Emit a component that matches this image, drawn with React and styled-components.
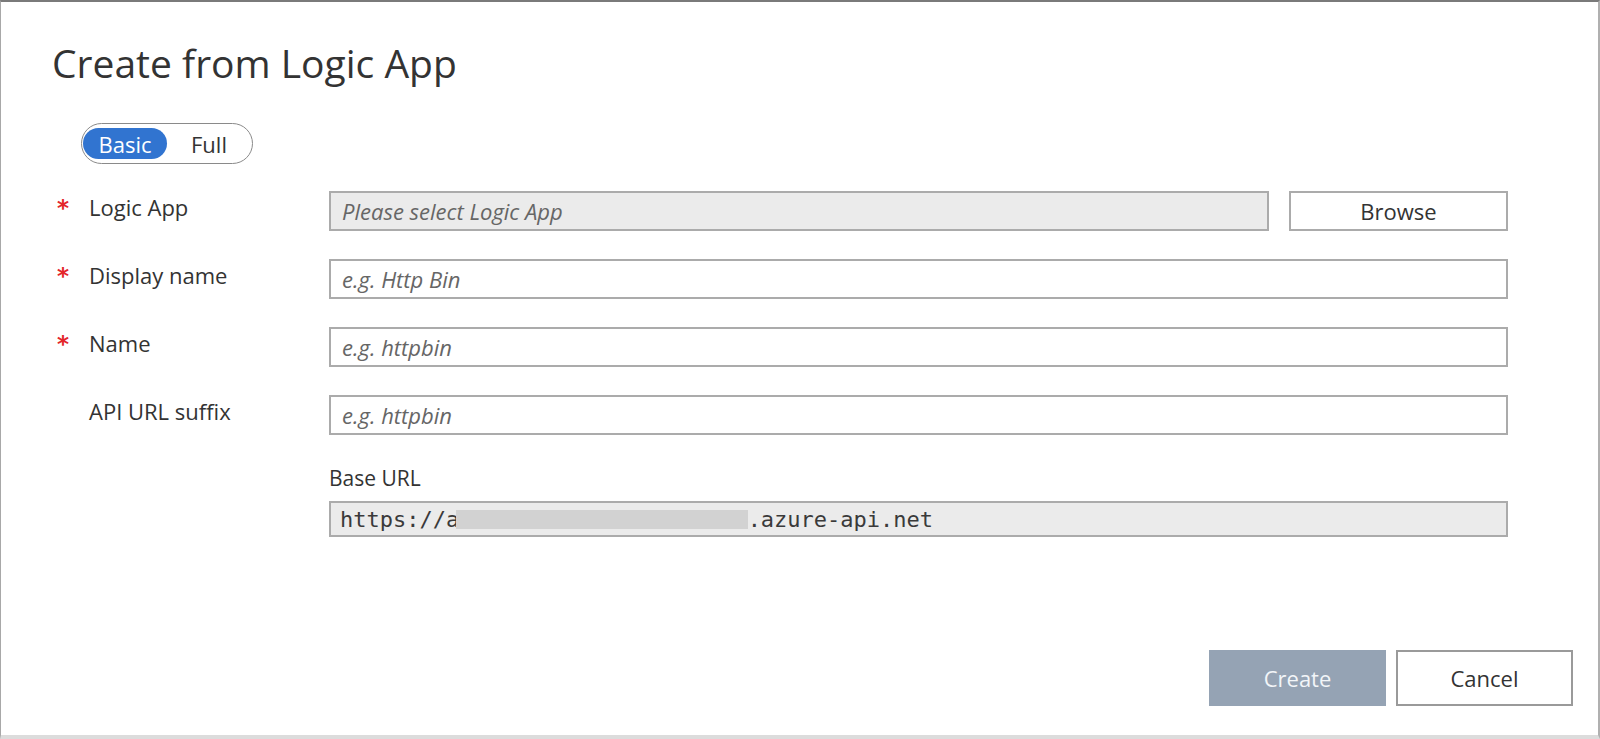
import React, { useState } from "react";
import styled, { createGlobalStyle } from "styled-components";

const GlobalStyle = createGlobalStyle`
  html, body {
    margin: 0;
    padding: 0;
    background: #ffffff;
  }
  body {
    font-family: "Open Sans", "Noto Sans", sans-serif;
    color: #333;
  }
  * {
    box-sizing: border-box;
  }
`;

const fields = [
  { key: "display", label: "Display name", placeholder: "e.g. Http Bin", required: true },
  { key: "name", label: "Name", placeholder: "e.g. httpbin", required: true },
  { key: "suffix", label: "API URL suffix", placeholder: "e.g. httpbin", required: false },
];

function App() {
  const [mode, setMode] = useState("basic");

  return (
    <>
      <GlobalStyle />
      <Dialog>
        <Title>Create from Logic App</Title>

        <Toggle>
          <ToggleOption active={mode === "basic"} onClick={() => setMode("basic")}>
            Basic
          </ToggleOption>
          <ToggleOption active={mode === "full"} onClick={() => setMode("full")}>
            Full
          </ToggleOption>
        </Toggle>

        <Form>
          <Row>
            <Required>*</Required>
            <Label>Logic App</Label>
            <FieldGroup>
              <TextInput readOnly disabledLook placeholder="Please select Logic App" />
              <BrowseButton>Browse</BrowseButton>
            </FieldGroup>
          </Row>

          {fields.map((f) => (
            <Row key={f.key}>
              <Required>{f.required ? "*" : ""}</Required>
              <Label>{f.label}</Label>
              <TextInput placeholder={f.placeholder} />
            </Row>
          ))}

          <Row>
            <span />
            <span />
            <BaseUrl>
              <SmallLabel>Base URL</SmallLabel>
              <UrlBox>
                https://a<Hidden>xxxxxxxxxxxxxxxxxxxxxx</Hidden>.azure-api.net
              </UrlBox>
            </BaseUrl>
          </Row>
        </Form>

        <Footer>
          <PrimaryButton disabled>Create</PrimaryButton>
          <SecondaryButton>Cancel</SecondaryButton>
        </Footer>
      </Dialog>
    </>
  );
}

// 다이얼로그 전체 박스
const Dialog = styled.div`
  width: 1600px;
  height: 739px;
  display: flex;
  flex-direction: column;
  background: #fff;
  border-top: 2px solid #7a7a7a;
  border-left: 1px solid #a8a8a8;
  border-right: 2px solid #b0b0b0;
  border-bottom: 4px solid #dcdcdc;
  padding: 37px 25px 29px 0;
`;

const Title = styled.h1`
  margin: 0 0 0 51px;
  font-size: 39px;
  line-height: 48px;
  font-weight: 400;
  color: #333;
`;

const Toggle = styled.div`
  margin: 36px 0 0 80px;
  width: 172px;
  height: 41px;
  display: grid;
  grid-template-columns: 1fr 1fr;
  padding: 4px 1px;
  border: 1.5px solid #8a8a8a;
  border-radius: 21px;
`;

const ToggleOption = styled.button`
  border: none;
  margin: 0;
  padding: 0;
  border-radius: 16px;
  font-family: "Open Sans", sans-serif;
  font-size: 22px;
  line-height: 30px;
  cursor: pointer;
  background: ${(p) => (p.active ? "#3174d0" : "transparent")};
  color: ${(p) => (p.active ? "#fff" : "#333")};
`;

const Form = styled.div`
  margin-top: 27px;
  padding: 0 65px 0 56px;
  display: flex;
  flex-direction: column;
  gap: 28px;
`;

const Row = styled.div`
  display: grid;
  grid-template-columns: 32px 240px 1fr;
  align-items: start;
`;

const Required = styled.span`
  color: #e3262a;
  font-family: "DejaVu Sans", sans-serif;
  font-weight: 700;
  font-size: 23px;
  line-height: 30px;
  padding-top: 2px;
`;

const Label = styled.label`
  font-size: 22px;
  line-height: 30px;
  padding-top: 1px;
  color: #333;
`;

const FieldGroup = styled.div`
  display: flex;
  gap: 20px;
`;

const TextInput = styled.input`
  flex: 1;
  width: 100%;
  height: 40px;
  padding: 0 11px;
  border: 2px solid #ababab;
  border-radius: 0;
  background: ${(p) => (p.disabledLook ? "#ebebeb" : "#fff")};
  font-family: "Open Sans", sans-serif;
  font-size: 22px;
  color: #333;
  outline: none;
  &::placeholder {
    color: #666;
    font-style: italic;
  }
`;

const BrowseButton = styled.button`
  width: 219px;
  height: 40px;
  background: #fff;
  border: 2px solid #ababab;
  font-family: "Open Sans", sans-serif;
  font-size: 22px;
  color: #333;
  padding: 0;
`;

const BaseUrl = styled.div`
  display: flex;
  flex-direction: column;
  gap: 8px;
`;

const SmallLabel = styled.div`
  font-size: 21px;
  line-height: 30px;
  color: #333;
`;

const UrlBox = styled.div`
  height: 36px;
  display: flex;
  align-items: center;
  padding: 0 9px;
  border: 2px solid #ababab;
  background: #ebebeb;
  font-family: "DejaVu Sans Mono", "Liberation Mono", monospace;
  font-size: 22px;
  color: #3a3a3a;
  white-space: pre;
`;

const Hidden = styled.span`
  display: inline-block;
  height: 19px;
  line-height: 19px;
  margin-left: -3px;
  background: #d2d2d2;
  color: transparent;
  filter: blur(0.6px);
`;

const Footer = styled.div`
  margin-top: auto;
  display: flex;
  justify-content: flex-end;
  gap: 10px;
`;

const BaseButton = styled.button`
  width: 177px;
  height: 56px;
  font-family: "Open Sans", sans-serif;
  font-size: 22px;
  padding: 0;
`;

const PrimaryButton = styled(BaseButton)`
  background: #95a3b4;
  border: none;
  color: #f2f5f8;
`;

const SecondaryButton = styled(BaseButton)`
  background: #fff;
  border: 2px solid #9a9a9a;
  color: #333;
`;

export default App;
